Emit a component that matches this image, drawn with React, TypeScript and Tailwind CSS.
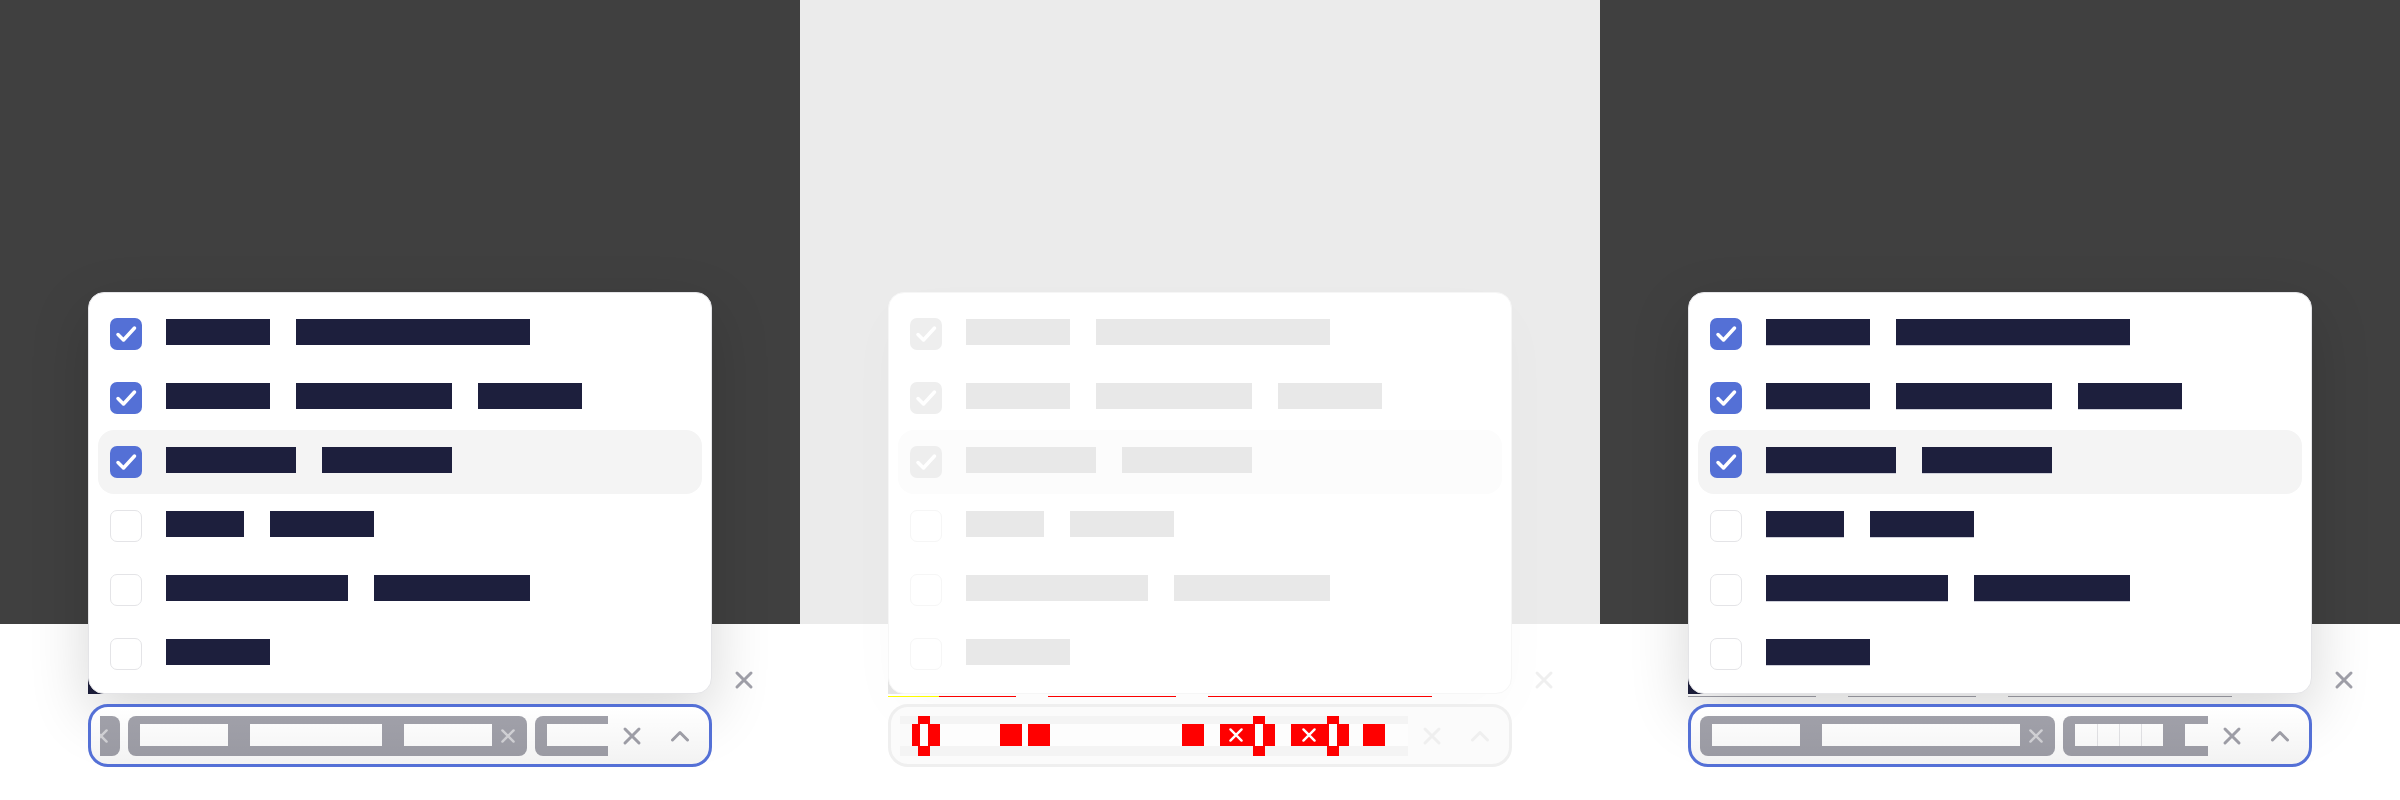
import React from "react"

type Variant = "expected" | "diff" | "actual"

const rows: { words: number[]; checked: boolean }[] = [
  { words: [4, 9], checked: true },
  { words: [4, 6, 4], checked: true },
  { words: [5, 5], checked: true },
  { words: [3, 4], checked: false },
  { words: [7, 6], checked: false },
  { words: [4], checked: false },
]

const labelWords = [4, 4, 7]

// diff strip inside the middle input: [width, kind]
const diffText: [number, string][] = [
  [12, "n"], [8, "r"], [8, "w"], [12, "r"], [60, "w"], [22, "r"], [6, "w"], [22, "r"],
  [132, "w"], [22, "r"], [16, "w"], [8, "r"], [16, "x"], [11, "r"], [8, "w"], [12, "r"],
  [16, "w"], [9, "r"], [17, "x"], [12, "r"], [8, "w"], [12, "r"], [14, "w"], [22, "r"], [23, "w"],
]
const diffBand: [number, string][] = [
  [18, "f"], [12, "r"], [323, "f"], [12, "r"], [62, "f"], [12, "r"], [69, "f"],
]

function XIcon({ className }: { className?: string }) {
  return (
    <svg viewBox="0 0 20 20" fill="none" stroke="currentColor" strokeWidth={3} strokeLinecap="round" className={className}>
      <path d="M3 3L17 17M17 3L3 17" />
    </svg>
  )
}

function ChevronUp({ className }: { className?: string }) {
  return (
    <svg viewBox="0 0 20 12" fill="none" stroke="currentColor" strokeWidth={3} strokeLinecap="round" strokeLinejoin="round" className={className}>
      <path d="M2.5 10L10 2.5L17.5 10" />
    </svg>
  )
}

function Checkbox({ checked, diff }: { checked: boolean; diff: boolean }) {
  if (checked) {
    return (
      <span className={`flex h-8 w-8 shrink-0 items-center justify-center rounded-[7px] ${diff ? "bg-[#eeeeee]" : "bg-[#5470d6]"}`}>
        <svg viewBox="0 0 32 32" className="h-8 w-8" fill="none" stroke="white" strokeWidth={3.5} strokeLinecap="round" strokeLinejoin="round">
          <path d="M8 16.5L13.5 22L24.5 10" />
        </svg>
      </span>
    )
  }
  return (
    <span
      className={`h-8 w-8 shrink-0 rounded-[7px] border-[1.5px] bg-white ${diff ? "border-[#f6f6f6]" : "border-[#e4e4e7]"}`}
    />
  )
}

function Chip({ words, divided }: { words: number[]; divided?: boolean }) {
  return (
    <div className="flex h-10 shrink-0 items-center rounded-lg bg-[#a1a1aa] pl-3 pr-[11px]">
      <div className="mb-[2px] flex gap-[22px]">
        {words.map((n, i) =>
          divided && i === 0 ? (
            <span key={i} className="flex h-[22px]">
              {Array.from({ length: n }).map((_, g) => (
                <span key={g} className={`h-[22px] w-[22px] bg-white ${g > 0 ? "border-l border-[#e4e4e7]" : ""}`} />
              ))}
            </span>
          ) : (
            <span key={i} className="block h-[22px] bg-white" style={{ width: n * 22 }} />
          )
        )}
      </div>
      <XIcon className="ml-2 h-4 w-4 text-[#d4d4d8]" />
    </div>
  )
}

function DiffChips() {
  const cell = (kind: string) =>
    kind === "r" ? "bg-[#ff0000]" : kind === "f" ? "bg-[#f4f4f4]" : kind === "n" ? "bg-[#fafafa]" : "bg-[#fdfdfd]"
  return (
    <div className="flex h-10 w-[508px] flex-col">
      <div className="flex h-2">
        {diffBand.map(([w, k], i) => (
          <span key={i} className={cell(k)} style={{ width: w }} />
        ))}
      </div>
      <div className="flex h-[22px]">
        {diffText.map(([w, k], i) =>
          k === "x" ? (
            <span key={i} className="flex items-center justify-center bg-[#ff0000]" style={{ width: w }}>
              <XIcon className="h-4 w-4 text-white" />
            </span>
          ) : (
            <span key={i} className={cell(k)} style={{ width: w }} />
          )
        )}
      </div>
      <div className="flex h-[10px]">
        {diffBand.map(([w, k], i) => (
          <span key={i} className={cell(k)} style={{ width: w }} />
        ))}
      </div>
    </div>
  )
}

function Dropdown({ variant }: { variant: Variant }) {
  const diff = variant === "diff"
  return (
    <div
      className={`absolute left-[88px] top-[292px] z-10 w-[624px] rounded-2xl border bg-white px-[9px] pt-[9px] pb-[7px] ${
        diff
          ? "border-[#f6f6f6] shadow-[0_20px_60px_rgba(0,0,0,0.02)]"
          : "border-[#e4e4e7] shadow-[0_20px_60px_rgba(0,0,0,0.16)]"
      }`}
    >
      {rows.map((row, r) => (
        <div
          key={r}
          className={`flex h-16 items-center gap-6 rounded-2xl pl-3 ${r === 2 ? (diff ? "bg-[#fcfcfc]" : "bg-[#f4f4f4]") : ""}`}
        >
          <Checkbox checked={row.checked} diff={diff} />
          <div className="mb-1 flex gap-[26px]">
            {row.words.map((n, i) => (
              <span
                key={i}
                className={`block h-[26px] ${
                  diff ? "bg-[#e8e8e8]" : variant === "actual" ? "bg-[#1d1f3d] shadow-[0_1px_0_#cfd0da]" : "bg-[#1d1f3d]"
                }`}
                style={{ width: n * 26 }}
              />
            ))}
          </div>
        </div>
      ))}
    </div>
  )
}

function Panel({ variant }: { variant: Variant }) {
  const diff = variant === "diff"
  const muted = diff ? "text-[#efefef]" : "text-[#a1a1aa]"
  return (
    <div className="relative flex h-[800px] w-[800px] shrink-0 flex-col">
      <div className={`h-[624px] ${diff ? "bg-[#ebebeb]" : "bg-[#404040]"}`} />
      <div className="flex flex-1 flex-col bg-white pl-[88px] pt-[38px]">
        <div className="flex w-[666px] items-start justify-between">
          <div className="flex gap-8">
            {labelWords.map((n, i) => (
              <div key={i} className="flex flex-col gap-[2px]" style={{ width: n * 32 }}>
                <span className={`block h-8 ${diff ? "bg-[#e6e6e6]" : "bg-[#1d1f3d]"}`} />
                <span
                  className={`block h-px ${
                    diff
                      ? i === 0
                        ? "bg-linear-to-r from-[#ffff00] from-40% to-[#ff0000] to-40%"
                        : "bg-[#ff0000]"
                      : variant === "actual"
                        ? "bg-[#a1a1aa]"
                        : "bg-transparent"
                  }`}
                />
              </div>
            ))}
          </div>
          <XIcon className={`mt-2 h-5 w-5 ${muted}`} />
        </div>

        <div
          className={`relative z-20 mt-[7px] flex h-[63px] w-[624px] items-center overflow-hidden rounded-[20px] border-[3px] pl-[9px] pr-[19px] ${
            diff ? "border-[#efefef] bg-[#fbfbfb]" : "border-[#5470d6] bg-white"
          }`}
        >
          <div className="flex min-w-0 flex-1 overflow-hidden">
            {diff ? (
              <DiffChips />
            ) : (
              <div className={`flex shrink-0 gap-2 ${variant === "expected" ? "-ml-[335px]" : ""}`}>
                <Chip words={rows[0].words} />
                <Chip words={rows[1].words} divided={variant === "actual"} />
                <Chip words={rows[2].words} />
              </div>
            )}
          </div>
          <XIcon className={`ml-[14px] h-5 w-5 shrink-0 ${muted}`} />
          <ChevronUp className={`ml-7 h-3 w-5 shrink-0 ${muted}`} />
          {!diff && (
            <div className="pointer-events-none absolute inset-0 bg-linear-to-b from-transparent to-black/[0.05]" />
          )}
        </div>
      </div>
      <Dropdown variant={variant} />
    </div>
  )
}

export default function App() {
  return (
    <div className="flex h-[800px] w-[2400px] overflow-hidden bg-white">
      <Panel variant="expected" />
      <Panel variant="diff" />
      <Panel variant="actual" />
    </div>
  )
}
